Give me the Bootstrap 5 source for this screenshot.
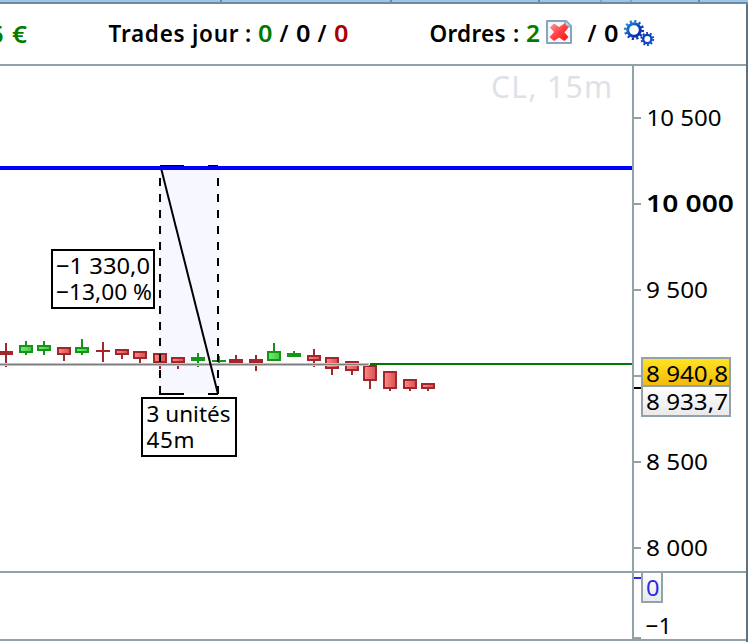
<!DOCTYPE html>
<html lang="fr">
<head>
<meta charset="utf-8">
<title>CL, 15m</title>
<link href="https://cdn.jsdelivr.net/npm/bootstrap@5.3.0/dist/css/bootstrap.min.css" rel="stylesheet">
<style>
body{width:748px;height:642px;overflow:hidden;background:#fff;color:#000;font-family:"Noto Sans","Open Sans",sans-serif}
.tabstrip{height:4px;background:#9fc5e0;border-bottom:2px solid #688cab}
.frame{height:638px;border-right:2px solid #60727f}
.infobar{height:62px;border-bottom:2px solid #93a1a9}
svg{display:block;flex:none}
svg text{font-size:22.5px;white-space:pre}
.infobar text{font-weight:600}
.plot{border-right:2px solid #93a1a9;box-sizing:content-box}
.lower{height:70px;border-top:2px solid #93a1a9;border-bottom:2px solid #93a1a9}
.up{fill:#159515}.down{fill:#a0282c}
.tick{fill:#93a1a9}
svg text.major{font-size:24px;font-weight:600}
</style>
<script src="https://cdn.jsdelivr.net/npm/bootstrap@5.3.0/dist/js/bootstrap.bundle.min.js"></script>
</head>
<body>
<div class="tabstrip"><svg width="748" height="4"><path d="M221 0v4M391 0v4M539 0v4M699 0v4" stroke="#688cab" stroke-width="2"/><path d="M601 0v2M631 0v2" stroke="#93a1a9" stroke-width="2"/></svg></div>
<div class="frame d-flex flex-column">
  <header class="infobar d-flex">
    <svg width="746" height="60" viewBox="0 4 746 60">
      <defs>
        <linearGradient id="cross" x2="1" y2="1"><stop stop-color="#ff9a9a"/><stop offset=".5" stop-color="#ff4040"/><stop offset="1" stop-color="#ff1010"/></linearGradient>
        <linearGradient id="gear" gradientUnits="userSpaceOnUse" x1="626" y1="22" x2="648" y2="44"><stop stop-color="#1690e0"/><stop offset=".55" stop-color="#0a2cae"/><stop offset="1" stop-color="#0f4cc8"/></linearGradient>
      </defs>
      <text x="3.500" y="43" text-anchor="end" fill="#007b00">5</text><text x="12" y="43" textLength="15" lengthAdjust="spacingAndGlyphs" fill="#007b00">€</text>
      <text x="108.500" y="42" textLength="130">Trades jour</text><text x="245" y="42">:</text>
      <text x="258" y="42" textLength="14.500" lengthAdjust="spacingAndGlyphs" fill="#007b00">0</text>
      <text x="279.500" y="42">/</text><text x="296" y="42" textLength="14.500" lengthAdjust="spacingAndGlyphs">0</text><text x="317.500" y="42">/</text>
      <text x="334" y="42" textLength="14.500" lengthAdjust="spacingAndGlyphs" fill="#a80000">0</text>
      <text x="429.500" y="42" textLength="76">Ordres</text><text x="513" y="42">:</text>
      <text x="526" y="42" textLength="14" lengthAdjust="spacingAndGlyphs" fill="#007b00">2</text>
      <g>
        <path d="M547 21h19l5 5v17h-24z" fill="#f3f6fa" stroke="#88a5bf" stroke-width="2" stroke-linejoin="round"/>
        <path d="M565 21v5.500h6" fill="#c2d2e0" stroke="#88a5bf" stroke-width="1.500"/>
        <path d="M550 27.500l4-4 5 3.500 5.500-3.500 4 4-4 5 4 4.500-4 4-5.500-3.500-5 3.500-4.500-4 4.500-5z" fill="url(#cross)"/>
      </g>
      <text x="587.500" y="42">/</text><text x="604" y="42" textLength="14.500" lengthAdjust="spacingAndGlyphs">0</text>
      <g fill="none" stroke="url(#gear)">
        <circle cx="634" cy="30" r="6.300" stroke-width="3"/>
        <circle cx="634" cy="30" r="8.700" stroke-width="2.600" stroke-dasharray="2.100 2.455"/>
        <circle cx="647.300" cy="39" r="4.100" stroke-width="2.400"/>
        <circle cx="647.300" cy="39" r="5.900" stroke-width="2" stroke-dasharray="1.900 1.807"/>
      </g>
    </svg>
  </header>
  <main class="d-flex">
    <svg class="plot" id="plot" width="632" height="505" viewBox="0 66 632 505">
      <defs>
        <linearGradient id="gUp"><stop stop-color="#70e870"/><stop offset="1" stop-color="#48c948"/></linearGradient>
        <linearGradient id="gDown"><stop stop-color="#ff8484"/><stop offset="1" stop-color="#d85555"/></linearGradient>
      </defs>
      <text x="491" y="98" textLength="121" fill="#dfe1e9" style="font-size:30px">CL, 15m</text>
      <rect x="160" y="168" width="60" height="226" fill="#f7f8ff"/>
      <g id="candles" shape-rendering="crispEdges"></g>
      <path d="M0 363h369v3H0z" fill="#c0c0c0" shape-rendering="crispEdges"/><path d="M0 364h368v1H0z" fill="#7d7d7d" shape-rendering="crispEdges"/>
      <path d="M370 363h262v2H370z" fill="#007800"/>
      <g stroke="#000" stroke-width="2" fill="none">
        <path d="M160 178V395M218 178V395" stroke-dasharray="8 8"/>
        <path d="M160 166h24M208 166h10M159 394h25M208 394h10M160 392v3M218 386v8"/>
        <path d="M161 168L218 394"/>
      </g>
      <path d="M0 166h632v4H0z" fill="#00f"/>
      <g fill="#fff" stroke="#000" stroke-width="2"><path d="M52 250h102v58H52zM142 398h94v58h-94z"/></g>
      <text x="56" y="274" textLength="94" lengthAdjust="spacingAndGlyphs">−1 330,0</text>
      <text x="56" y="300" textLength="96" lengthAdjust="spacingAndGlyphs">−13,00 %</text>
      <text x="146.500" y="422" textLength="84">3 unités</text>
      <text x="146.500" y="448" textLength="48">45m</text>
    </svg>
    <svg width="112" height="505" viewBox="634 66 112 505">
      <defs>
        <linearGradient id="gold" x2="0" y2="1"><stop stop-color="#ffe521"/><stop offset="1" stop-color="#f2b90c"/></linearGradient>
        <linearGradient id="pale" x2="0" y2="1"><stop stop-color="#fff"/><stop offset="1" stop-color="#e9e9ec"/></linearGradient>
      </defs>
      <path class="tick" d="M634 117h7v2h-7zM634 203h7v2h-7zM634 289h7v2h-7zM634 375h7v2h-7zM634 461h7v2h-7zM634 547h7v2h-7z"/>
      <path d="M634 387h7v2h-7z"/>
      <g stroke="#93a1a9" stroke-width="2"><path d="M642 386h88v30h-88z" fill="url(#pale)"/><path d="M642 358h88v28h-88z" fill="url(#gold)"/></g>
      <text x="646.500" y="126" textLength="75" lengthAdjust="spacingAndGlyphs">10 500</text>
      <text class="major" x="646" y="212" textLength="88" lengthAdjust="spacingAndGlyphs">10 000</text>
      <text x="646" y="298" textLength="62" lengthAdjust="spacingAndGlyphs">9 500</text>
      <text x="646" y="382" textLength="82" lengthAdjust="spacingAndGlyphs">8 940,8</text>
      <text x="646" y="410" textLength="82" lengthAdjust="spacingAndGlyphs">8 933,7</text>
      <text x="646" y="470" textLength="62" lengthAdjust="spacingAndGlyphs">8 500</text>
      <text x="646" y="556" textLength="62" lengthAdjust="spacingAndGlyphs">8 000</text>
    </svg>
  </main>
  <section class="lower d-flex">
    <svg class="plot" width="632" height="66"></svg>
    <svg width="112" height="66" viewBox="634 573 112 66">
      <path d="M634 577h7v2h-7z" fill="#2a2ae0"/><path class="tick" d="M634 637h7v2h-7z"/>
      <path d="M642 572h20v30h-20z" fill="url(#pale)" stroke="#93a1a9" stroke-width="2"/>
      <text x="646" y="596" textLength="13.500" lengthAdjust="spacingAndGlyphs" fill="#2a2ae0">0</text>
      <text x="645.500" y="634" textLength="26">−1</text>
    </svg>
  </section>
</div>
<script>
// centre x, wick top, body top, body bottom, wick bottom, rising
const data=[[6,343,351,355,367,0],[26,341,345,353,355,1],[44,341,345,351,355,1],[64,347,347,355,361,0],[82,339,347,353,355,1],[103,342,350,352,362,0],[122,349,349,355,359,0],[140,351,351,359,364,0],[160,353,353,363,369,0],[178,357,357,363,369,0],[198,353,357,361,367,1],[219,356,360,362,366,1],[236,355,359,363,364,0],[256,355,359,363,371,0],[274,343,351,361,361,1],[294,351,353,357,357,1],[314,349,355,361,367,0],[332,357,357,369,375,0],[352,361,361,371,375,0],[370,365,365,381,389,0],[390,371,371,389,391,0],[410,379,379,389,391,0],[428,383,383,389,391,0]];
document.getElementById('candles').innerHTML=data.map(([x,a,t,b,z,u])=>{
  const k=u?'up':'down';
  let s=`<rect class="${k}" x="${x-1}" y="${a}" width="2" height="${z-a}"/><rect class="${k}" x="${x-7}" y="${t}" width="14" height="${b-t}"/>`;
  if(b-t>4)s+=`<rect x="${x-5}" y="${t+2}" width="10" height="${b-t-4}" fill="url(#${u?'gUp':'gDown'})"/>`;
  return s;
}).join('');
</script>
</body>
</html>
